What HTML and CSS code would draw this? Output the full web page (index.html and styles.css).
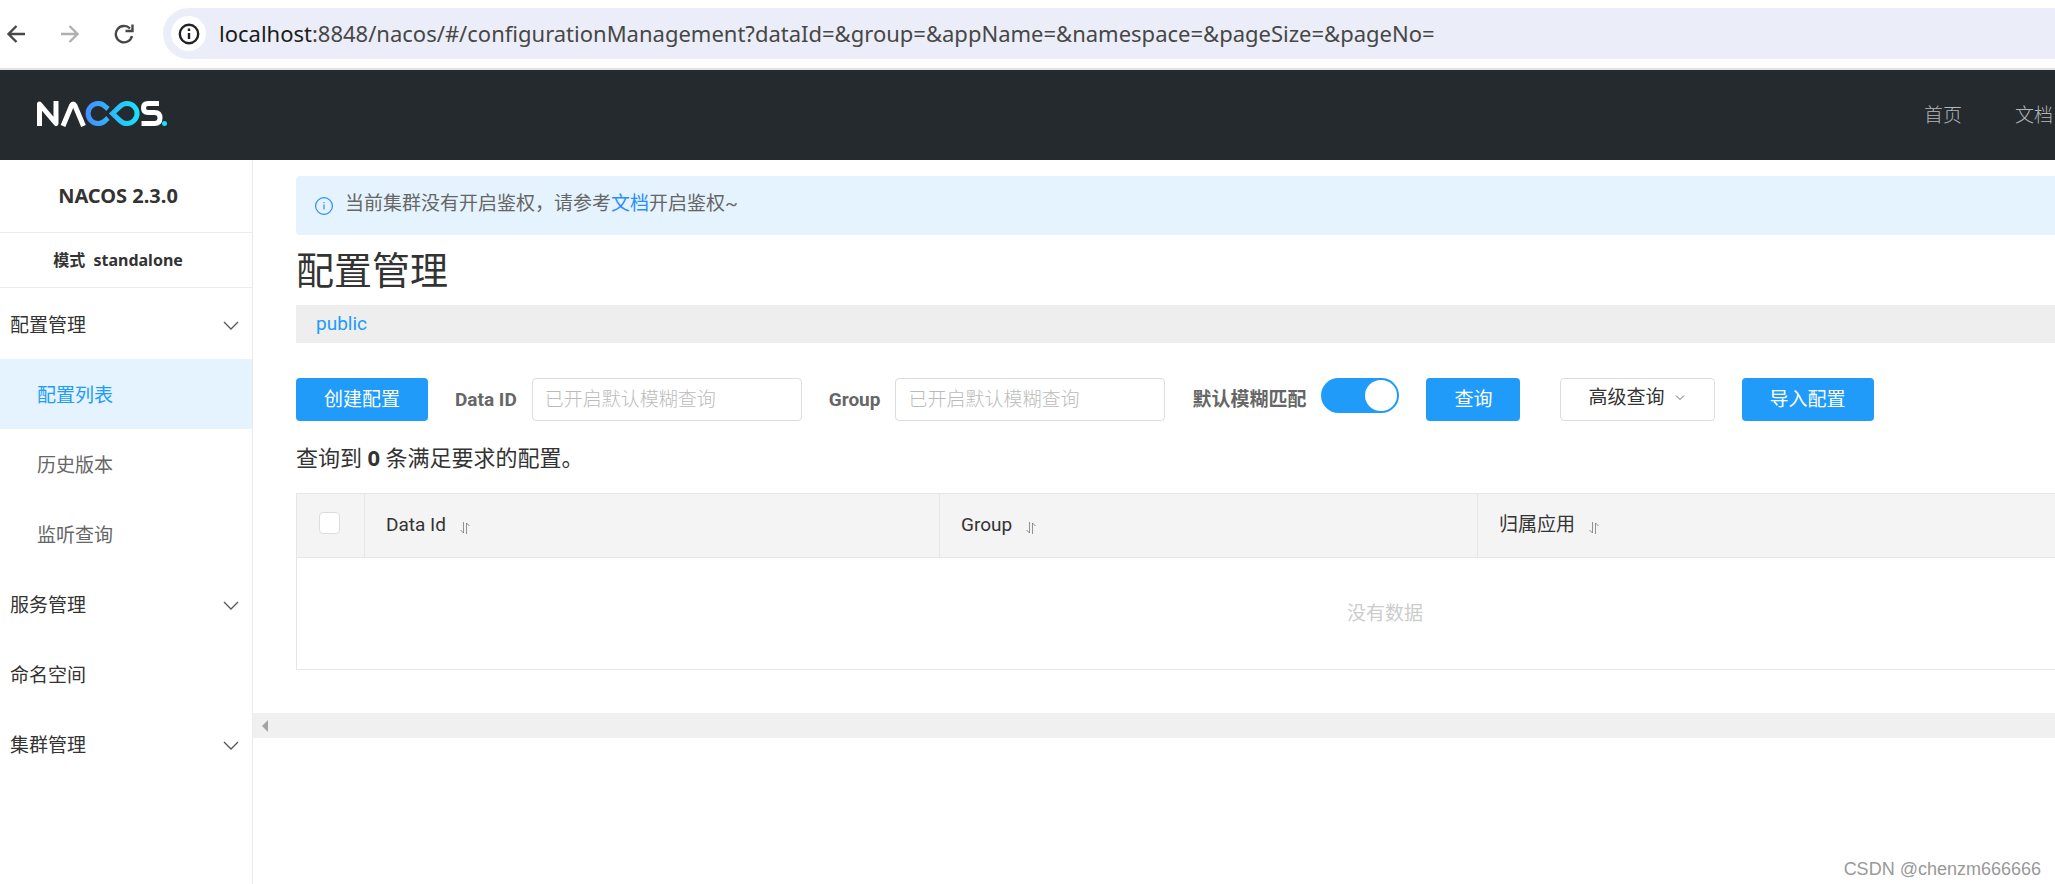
FILE: index.html
```html
<!DOCTYPE html>
<html lang="zh-CN">
<head>
<meta charset="utf-8">
<title>NACOS</title>
<link rel="stylesheet" href="styles.css">
</head>
<body>
<div class="browser">
  <button class="nav-btn" type="button" aria-label="后退"><svg width="20" height="20" viewBox="0 0 20 20"><path d="M19 10H3M10.500 2L2.500 10l8 8" /></svg></button>
  <button class="nav-btn nav-off" type="button" aria-label="前进"><svg width="20" height="20" viewBox="0 0 20 20"><path d="M1 10h16M9.500 2l8 8-8 8" /></svg></button>
  <button class="nav-btn" type="button" aria-label="刷新"><svg width="20" height="20" viewBox="0 0 20 20"><path d="M16 4.500A8.200 8.200 0 1 0 18 12M18.500 .5v6.500H11.500" /></svg></button>
  <div class="omnibox">
    <span class="site-info"><svg width="22" height="22" viewBox="0 0 22 22"><circle cx="11" cy="11" r="9.200"/><path d="M11 10v6M11 5.500v2.500"/></svg></span>
    <div class="url"><span class="host">localhost</span>:8848/nacos/#/configurationManagement?dataId=&amp;group=&amp;appName=&amp;namespace=&amp;pageSize=&amp;pageNo=</div>
  </div>
</div>
<header class="top">
  <a class="logo" href="#" aria-label="NACOS">
    <svg width="131" height="26" viewBox="0 0 131 26" fill="none">
      <defs><linearGradient id="g" gradientUnits="userSpaceOnUse" x1="48" y1="0" x2="102" y2="0"><stop offset="0" stop-color="#448dff"/><stop offset="1" stop-color="#18e2f8"/></linearGradient></defs>
      <g stroke="#fff" stroke-width="5">
        <path d="M2.500 25V3L19 22.500V0" stroke-linejoin="round"/>
        <path d="M26 25L34.500 4.500q1.700-3 3.400 0L46.500 25" />
        <path d="M122 2.500H111q-4.500 0-4.500 4.500t4.500 4.500h6.500q5.500 0 5.500 5.500t-5.500 5.500H104.500"/>
      </g>
      <g stroke="url(#g)" stroke-width="5">
        <path d="M71 8L68.500 5.800A10 10 0 1 0 68.500 19.200L71 17"/>
        <path d="M75.500 12.500L83 5.400A10 10 0 1 1 83 19.600Z"/>
      </g>
      <circle cx="127.500" cy="22.500" r="2.500" fill="#18e2f8"/>
    </svg>
  </a>
  <nav class="links"><a href="#">首页</a><a href="#">文档</a></nav>
</header>
<div class="body">
  <aside class="side">
    <h1 class="version">NACOS 2.3.0</h1>
    <div class="mode">模式&nbsp; standalone</div>
    <nav class="menu">
      <a class="item" href="#">配置管理<svg class="chev" width="16" height="10" viewBox="0 0 16 10"><path d="M1 1l7 7 7-7"/></svg></a>
      <a class="item sub active" href="#">配置列表</a>
      <a class="item sub" href="#">历史版本</a>
      <a class="item sub" href="#">监听查询</a>
      <a class="item" href="#">服务管理<svg class="chev" width="16" height="10" viewBox="0 0 16 10"><path d="M1 1l7 7 7-7"/></svg></a>
      <a class="item" href="#">命名空间</a>
      <a class="item" href="#">集群管理<svg class="chev" width="16" height="10" viewBox="0 0 16 10"><path d="M1 1l7 7 7-7"/></svg></a>
    </nav>
  </aside>
  <main class="main">
    <div class="pane">
      <div class="notice">
        <svg width="18" height="18" viewBox="0 0 18 18"><circle cx="9" cy="9" r="8.400"/><path d="M9 7.500v5M9 5v1.300"/></svg>
        <p>当前集群没有开启鉴权，请参考<a href="#">文档</a>开启鉴权~</p>
      </div>
      <h2 class="title">配置管理</h2>
      <div class="spaces"><a href="#">public</a></div>
      <form class="filters">
        <button class="btn primary" type="button">创建配置</button>
        <div class="field"><label for="dataid">Data ID</label><input id="dataid" class="text" type="text" placeholder="已开启默认模糊查询"></div>
        <div class="field"><label for="group">Group</label><input id="group" class="text" type="text" placeholder="已开启默认模糊查询"></div>
        <div class="field"><label for="fuzzy">默认模糊匹配</label><input id="fuzzy" class="switch" type="checkbox" role="switch" checked></div>
        <button class="btn primary" type="button">查询</button>
        <button class="btn outline" type="button">高级查询<svg width="10" height="8" viewBox="0 0 10 8"><path d="M1 1.500l4 4 4-4"/></svg></button>
        <button class="btn primary" type="button">导入配置</button>
      </form>
      <p class="count">查询到 <strong>0</strong> 条满足要求的配置。</p>
      <table class="grid">
        <colgroup><col class="c-check"><col class="c-id"><col class="c-group"><col></colgroup>
        <thead><tr>
          <th class="check"><input type="checkbox" aria-label="全选"></th>
          <th>Data Id<svg class="sort" width="10" height="12" viewBox="0 0 10 12"><path d="M3.500 0v11L.5 8M6.500 12V1l3 3"/></svg></th>
          <th>Group<svg class="sort" width="10" height="12" viewBox="0 0 10 12"><path d="M3.500 0v11L.5 8M6.500 12V1l3 3"/></svg></th>
          <th>归属应用<svg class="sort" width="10" height="12" viewBox="0 0 10 12"><path d="M3.500 0v11L.5 8M6.500 12V1l3 3"/></svg></th>
        </tr></thead>
        <tbody><tr><td class="empty" colspan="4">没有数据</td></tr></tbody>
      </table>
    </div>
    <div class="hscroll"><svg width="6" height="12" viewBox="0 0 6 12"><path d="M6 0v12L0 6z"/></svg></div>
  </main>
</div>
<div class="mark">CSDN @chenzm666666</div>
</body>
</html>
```

FILE: styles.css
```css
* { box-sizing: border-box; }
body {
  margin: 0;
  min-height: 100vh;
  display: flex;
  flex-direction: column;
  overflow: hidden;
  background: #fff;
  color: #333;
  font: 400 19px/28px Roboto, "Noto Sans CJK SC", sans-serif;
}
h1, h2, p { margin: 0; }
a { color: inherit; text-decoration: none; }
button, input { font: inherit; }
svg { fill: none; flex: none; }

.browser {
  display: flex;
  align-items: center;
  height: 70px;
  padding: 0 0 1px 6px;
  border-bottom: 2px solid #dfe1e2;
}
.nav-btn {
  display: flex;
  padding: 0;
  margin-right: 34px;
  border: 0;
  background: none;
  stroke: #474747;
  stroke-width: 2.4;
}
.nav-off { stroke: #b0b0b0; }
.omnibox {
  flex: 1;
  display: flex;
  align-items: center;
  gap: 13px;
  height: 51px;
  margin-left: -5px;
  padding-left: 8px;
  border-radius: 26px 0 0 26px;
  background: #ebeef8;
}
.site-info {
  display: flex;
  align-items: center;
  justify-content: center;
  width: 35px;
  height: 35px;
  border-radius: 50%;
  background: #fff;
  stroke: #202124;
  stroke-width: 2.4;
}
.url {
  padding-bottom: 2px;
  font: 400 22px/30px "Noto Sans", sans-serif;
  color: #474747;
  white-space: nowrap;
}
.host { color: #1b1b1b; }

.top {
  display: flex;
  align-items: center;
  justify-content: space-between;
  height: 90px;
  padding: 0 2px 0 37px;
  background: #252a2f;
}
.logo { display: flex; padding-bottom: 2px; }
.links { display: flex; gap: 53px; padding-top: 2px; color: #b4b6b8; font-weight: 300; }

.body { flex: 1; display: flex; }
.side {
  flex: none;
  width: 253px;
  border-right: 1px solid #ebebeb;
}
.version, .mode {
  border-bottom: 1px solid #ebebeb;
  text-align: center;
  font-family: "Noto Sans", "Noto Sans CJK SC", sans-serif;
  font-weight: 700;
}
.version { padding: 22px 16px 22px 0; font-size: 20px; line-height: 28px; }
.mode { padding: 13px 16px 13px 0; font-size: 16px; line-height: 28px; }
.menu { padding-top: 1px; }
.item {
  display: flex;
  align-items: center;
  justify-content: space-between;
  height: 70px;
  padding: 3px 13px 0 10px;
}
.sub { padding-left: 37px; color: #666; }
.active { background: #e4f3fe; color: #209bfa; }
.chev { stroke: #555; stroke-width: 1.3; }

.main { flex: 1; min-width: 0; overflow: hidden; }
.pane { min-width: 2221px; padding: 16px 0 43px 43px; }
.notice {
  display: flex;
  gap: 12px;
  padding: 14px 19px 17px;
  border-radius: 4px;
  background: #e4f3fe;
  color: #666;
}
.notice svg { margin-top: 7px; stroke: #298dff; stroke-width: 1.2; }
.notice a { color: #298dff; }
.title { margin: 9px 0 7px; font-size: 38px; line-height: 54px; font-weight: 400; }
.spaces { padding: 5px 20px; background: #eee; color: #209bfa; }
.filters { display: flex; margin-top: 35px; }
.btn {
  height: 43px;
  margin-right: 27px;
  padding: 0 28px;
  border: 0;
  border-radius: 4px;
  font-size: 19px;
}
.primary { background: #209bfa; color: #fff; }
.outline {
  display: flex;
  align-items: center;
  gap: 10px;
  margin-left: 13px;
  padding: 0 29px 4px 27px;
  border: 1px solid #ddd;
  background: #fff;
  color: #333;
  stroke: #666;
}
.field { display: flex; margin-right: 27px; }
.field label {
  line-height: 43px;
  color: #666;
  font-size: 19px;
  font-weight: 700;
  margin-right: 15px;
}
.text {
  width: 270px;
  height: 43px;
  padding: 0 12px;
  border: 1px solid #ddd;
  border-radius: 4px;
  font-weight: 300;
}
.text::placeholder { color: #bbb; }
.switch {
  appearance: none;
  width: 78px;
  height: 35px;
  margin: 0;
  padding: 2px;
  border-radius: 18px;
  background: #209bfa;
}
.switch::before {
  content: "";
  display: block;
  width: 32px;
  height: 31px;
  margin-left: auto;
  border-radius: 50%;
  background: #fff;
}
.count { margin: 22px 0 20px; font-size: 22px; line-height: 29px; }
.count strong { font-family: "Noto Sans", sans-serif; font-weight: 700; }
.grid {
  width: 100%;
  table-layout: fixed;
  border-collapse: collapse;
}
.c-check { width: 68px; }
.c-id { width: 575px; }
.c-group { width: 538px; }
.grid th, .grid td { border: 1px solid #e6e6e6; }
.grid th {
  height: 64px;
  padding: 0 21px 2px;
  background: #f4f4f4;
  text-align: left;
  font-weight: 400;
}
.grid .check { padding: 0 2px 2px 0; text-align: center; }
.check input {
  appearance: none;
  display: block;
  width: 21px;
  height: 22px;
  margin: 0 auto 4px;
  border: 1px solid #ddd;
  border-radius: 4px;
  background: #fff;
}
.sort { margin-left: 14px; vertical-align: -3px; stroke: #777; stroke-width: .8; }
.grid .empty { height: 112px; padding: 0; text-align: center; color: #ccc; }
.hscroll {
  display: flex;
  align-items: center;
  height: 25px;
  padding-left: 9px;
  background: #f0f0f0;
}
.hscroll svg { fill: #a3a3a3; }
.mark {
  position: absolute;
  right: 14px;
  bottom: 1px;
  color: #999;
  font: 400 18px/28px "Liberation Sans", sans-serif;
}
```
